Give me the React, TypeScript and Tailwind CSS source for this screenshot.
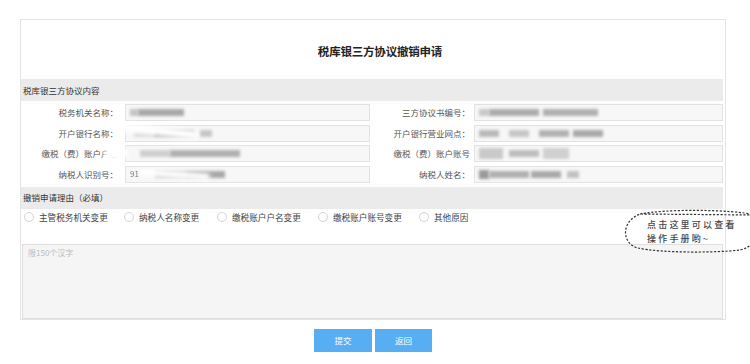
import React from "react";

const font = '"Noto Sans CJK SC", "Liberation Sans", sans-serif';

function Blur({ w, ml = 0, c = "#a9a9a9", h = 7 }: { w: number; ml?: number; c?: string; h?: number }) {
  return (
    <div
      className="blur-[1.8px] shrink-0"
      style={{ width: w, marginLeft: ml, height: h, background: c }}
    />
  );
}

function Box({ children, w }: { children?: React.ReactNode; w: string }) {
  return (
    <div className={`${w} h-[17px] border border-[#e2e2e2] bg-[#f7f7f7] flex items-center pl-[4px] overflow-hidden`}>
      {children}
    </div>
  );
}

function Label({ text, w }: { text: string; w: string }) {
  return (
    <div className={`${w} text-right text-[8.5px] leading-[17px] text-[#555] whitespace-nowrap`}>{text}</div>
  );
}

export default function App() {
  const rows = [
    {
      l: "税务机关名称：",
      lv: (
        <>
          <Blur w={8} c="#c4c4c4" />
          <Blur w={46} c="#a8a8a8" />
        </>
      ),
      r: "三方协议书编号：",
      rv: (
        <>
          <Blur w={10} c="#c8c8c8" />
          <Blur w={50} c="#ababab" />
          <Blur w={55} ml={4} c="#b0b0b0" />
        </>
      ),
    },
    {
      l: "开户银行名称：",
      lv: (
        <>
          <Blur w={20} ml={4} c="#d8d8d8" />
          <Blur w={40} c="#a6a6a6" />
          <Blur w={12} ml={6} c="#c6c6c6" />
        </>
      ),
      r: "开户银行营业网点：",
      rv: (
        <>
          <Blur w={20} c="#b9b9b9" />
          <Blur w={20} ml={10} c="#c6c6c6" />
          <Blur w={30} ml={10} c="#b2b2b2" />
          <Blur w={30} ml={4} c="#a9a9a9" />
        </>
      ),
    },
    {
      l: "缴税（费）账户户名",
      lv: (
        <>
          <Blur w={30} ml={10} c="#cfcfcf" />
          <Blur w={70} c="#b0b0b0" />
        </>
      ),
      r: "缴税（费）账户账号",
      rv: (
        <>
          <Blur w={24} c="#c9c9c9" h={11} />
          <Blur w={30} ml={6} c="#bdbdbd" />
          <Blur w={26} ml={4} c="#d0d0d0" h={11} />
        </>
      ),
    },
    {
      l: "纳税人识别号：",
      lv: (
        <>
          <span className="text-[8px] leading-[10px] text-[#777] blur-[0.6px]">91</span>
          <Blur w={30} ml={16} c="#c2c2c2" />
          <Blur w={40} c="#a8a8a8" />
        </>
      ),
      r: "纳税人姓名：",
      rv: (
        <>
          <Blur w={10} c="#999" h={9} />
          <Blur w={40} c="#b0b0b0" />
          <Blur w={30} ml={2} c="#a9a9a9" />
          <Blur w={12} ml={6} c="#c1c1c1" />
        </>
      ),
    },
  ];

  const reasons = [
    { t: "主管税务机关变更", w: "w-[100px]" },
    { t: "纳税人名称变更", w: "w-[93px]" },
    { t: "缴税账户户名变更", w: "w-[101px]" },
    { t: "缴税账户账号变更", w: "w-[101px]" },
    { t: "其他原因", w: "w-[60px]" },
  ];

  return (
    <div className="relative w-[750px] h-[364px] bg-white overflow-hidden" style={{ fontFamily: font }}>
      <div className="pt-[19px] pl-[20px]">
        <div className="w-[706px] h-[301px] border border-[#e4e4e4] flex flex-col">
          <div className="h-[59px] flex items-center justify-center pl-[14px] pt-[4px]">
            <span className="text-[11.5px] font-bold text-[#222] tracking-[-0.2px]">税库银三方协议撤销申请</span>
          </div>
          <div className="h-[22px] mr-[2px] bg-[#ebebeb] flex items-center pl-[2px] text-[8.5px] text-[#333]">
            税库银三方协议内容
          </div>
          <div className="pt-[3px] flex flex-col gap-[3.5px]">
            {rows.map((r, i) => (
              <div key={i} className="flex items-center">
                <Label text={r.l} w="w-[97px]" />
                <div className="ml-[7px]">
                  <Box w="w-[245px]">{r.lv}</Box>
                </div>
                <Label text={r.r} w="w-[100px]" />
                <div className="ml-[4px]">
                  <Box w="w-[249px]">{r.rv}</Box>
                </div>
              </div>
            ))}
          </div>
          <div className="mt-[4px] h-[22px] mr-[2px] bg-[#ebebeb] flex items-center pl-[2px] text-[8.5px] text-[#333]">
            撤销申请理由（必填）
          </div>
          <div className="h-[18px] flex items-center pl-[3px]">
            {reasons.map((r) => (
              <div key={r.t} className={`${r.w} flex items-center`}>
                <div className="w-[10px] h-[10px] rounded-full border border-[#d4d4d4] bg-white shrink-0" />
                <span className="ml-[5px] text-[8.6px] text-[#444] whitespace-nowrap">{r.t}</span>
              </div>
            ))}
          </div>
          <div className="mt-[17px] ml-[1px] mr-[2px] h-[75px] border border-[#dedede] bg-[#f5f5f5] pl-[5px] pt-[2px] text-[8px] leading-[12px] text-[#bbb]">
            限150个汉字
          </div>
        </div>
        <div className="w-[706px] flex justify-center gap-[3px] mt-[9px]">
          <button className="w-[58px] h-[23px] bg-[#57aef2] text-white text-[8.5px] flex items-center justify-center">
            提交
          </button>
          <button className="w-[57px] h-[23px] bg-[#57aef2] text-white text-[8.5px] flex items-center justify-center">
            返回
          </button>
        </div>
      </div>

      {/* white smudges over blurred data */}
      <div className="absolute left-[108px] top-[126px] w-[90px] h-[9px] rounded-full bg-white blur-[2px] rotate-[6deg]" />
      <div className="absolute left-[104px] top-[146px] w-[24px] h-[14px] rounded-full bg-white blur-[2px]" />
      <div className="absolute left-[140px] top-[171px] w-[70px] h-[7px] rounded-full bg-white blur-[2px] rotate-[4deg]" />

      {/* callout */}
      <div className="absolute left-[620px] top-[208px] w-[140px] h-[46px]">
        <svg width="140" height="46" className="absolute inset-0">
          <path
            d="M20 6 C 45 1, 110 1, 136 7 M 136 7 C 142 20, 138 38, 120 42 C 95 45, 40 45, 18 40 C 2 36, 0 14, 20 6 Z"
            fill="none"
            stroke="#333"
            strokeWidth="1.2"
            strokeDasharray="2.2 1.6"
          />
        </svg>
        <div className="absolute left-[27px] top-[10px] text-[9px] leading-[14px] text-[#444] tracking-[2.2px] font-medium whitespace-nowrap">
          <div>点击这里可以查看</div>
          <div>操作手册哟~</div>
        </div>
      </div>
    </div>
  );
}
